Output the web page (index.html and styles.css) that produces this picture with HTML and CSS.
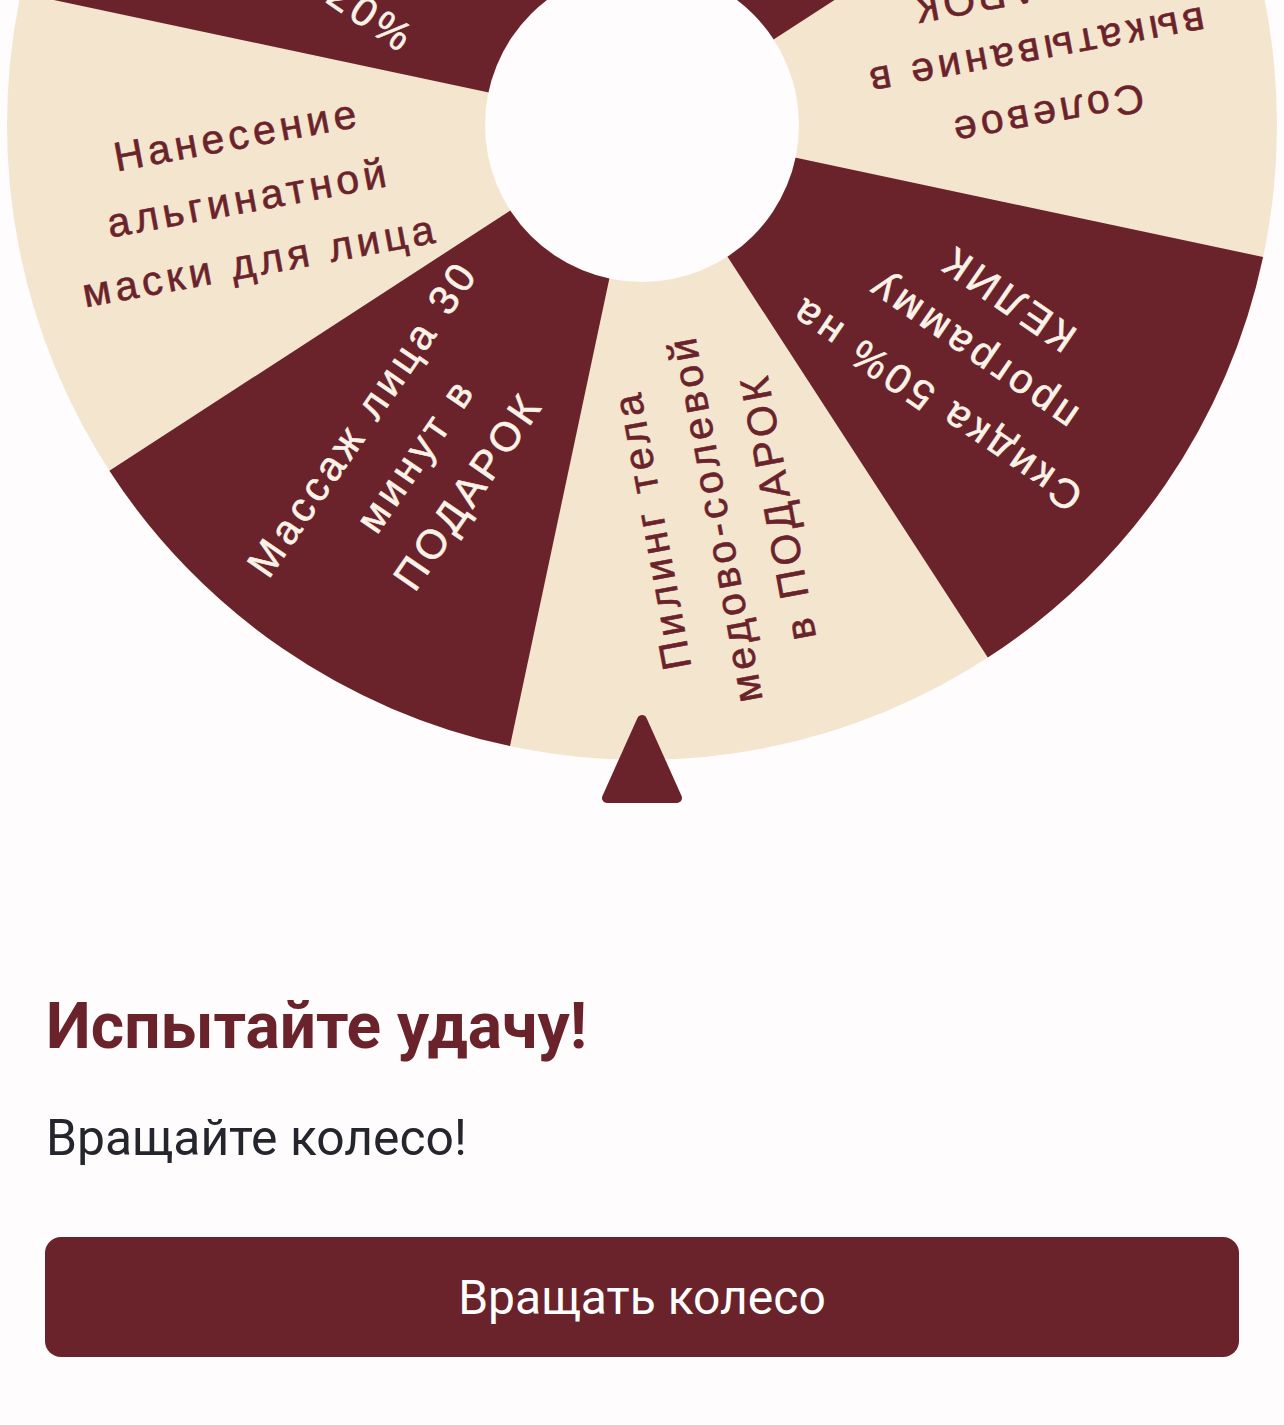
FILE: index.html
```html
<!DOCTYPE html>
<html lang="ru">
<head>
<meta charset="utf-8">
<title>Колесо фортуны</title>
<link rel="stylesheet" href="styles.css">
</head>
<body>
<div class="page">
  <div class="wheel-wrap">
    <svg class="wheel" viewBox="0 0 1284 830" width="1284" height="830" xmlns="http://www.w3.org/2000/svg">
      <circle class="seg-cream" cx="642" cy="125" r="635"/>
      <path class="seg-dark" d="M642 125 L987.8 657.6 A635 635 0 0 0 1263.1 257.0 Z"/>
      <path class="seg-dark" d="M642 125 L1174.6 -220.8 A635 635 0 0 0 774.0 -496.1 Z"/>
      <path class="seg-dark" d="M642 125 L296.2 -407.6 A635 635 0 0 0 20.9 -7.0 Z"/>
      <path class="seg-dark" d="M642 125 L109.4 470.8 A635 635 0 0 0 510.0 746.1 Z"/>

      <g transform="translate(642 125) rotate(-100.5)">
        <text class="wt on-cream" x="-400" y="-50">Пилинг тела</text>
        <text class="wt on-cream" x="-400" y="14">медово-солевой</text>
        <text class="wt on-cream" x="-400" y="78">в ПОДАРОК</text>
      </g>
      <g transform="translate(642 125) rotate(-145.5)">
        <text class="wt on-dark" x="-400" y="-50">Скидка 50% на</text>
        <text class="wt on-dark" x="-400" y="14">программу</text>
        <text class="wt on-dark" x="-400" y="78">КЕЛИК</text>
      </g>
      <g transform="translate(642 125) rotate(-190.5)">
        <text class="wt on-cream" x="-400" y="-50">Солевое</text>
        <text class="wt on-cream" x="-400" y="14">выкатывание в</text>
        <text class="wt on-cream" x="-400" y="78">ПОДАРОК</text>
      </g>
      <g transform="translate(642 125) rotate(-235.5)">
        <text class="wt on-dark" x="-400" y="-18">Скидка 30% на</text>
        <text class="wt on-dark" x="-400" y="46">массаж тела</text>
      </g>
      <g transform="translate(642 125) rotate(-280.5)">
        <text class="wt on-cream" x="-400" y="-18">Обёртывание</text>
        <text class="wt on-cream" x="-400" y="46">в ПОДАРОК</text>
      </g>
      <g transform="translate(642 125) rotate(-325.5)">
        <text class="wt on-dark" x="-400" y="-50">Скидка на</text>
        <text class="wt on-dark" x="-400" y="14">комплекс</text>
        <text class="wt on-dark" x="-400" y="78">процедур 20%</text>
      </g>
      <g transform="translate(642 125) rotate(-10.5)">
        <text class="wt on-cream" x="-400" y="-50">Нанесение</text>
        <text class="wt on-cream" x="-400" y="14">альгинатной</text>
        <text class="wt on-cream" x="-400" y="78">маски для лица</text>
      </g>
      <g transform="translate(642 125) rotate(-55.5)">
        <text class="wt on-dark" x="-400" y="-50">Массаж лица 30</text>
        <text class="wt on-dark" x="-400" y="14">минут в</text>
        <text class="wt on-dark" x="-400" y="78">ПОДАРОК</text>
      </g>

      <circle class="hub" cx="642" cy="125" r="157"/>
      <polygon class="pointer" points="642,720 607,798 677,798"/>
    </svg>
  </div>
  <div class="content">
    <h1 class="title">Испытайте удачу!</h1>
    <p class="subtitle">Вращайте колесо!</p>
    <button class="spin-btn" type="button">Вращать колесо</button>
  </div>
</div>
</body>
</html>
```
FILE: styles.css
```css
html, body {
  margin: 0;
  padding: 0;
}

body {
  background: #fefcfc;
  font-family: Roboto, "Liberation Sans", Arial, sans-serif;
  width: 1284px;
  height: 1425px;
  overflow: hidden;
}

.page {
  display: flex;
  flex-direction: column;
}

.wheel-wrap {
  height: 830px;
  overflow: hidden;
}

.wheel {
  display: block;
}

.seg-cream {
  fill: #f4e5cf;
}

.seg-dark {
  fill: #6b232b;
}

.hub {
  fill: #fefcfc;
}

.pointer {
  fill: #6b232b;
  stroke: #6b232b;
  stroke-width: 10;
  stroke-linejoin: round;
}

.wt {
  font-family: "Liberation Sans", Arial, sans-serif;
  font-size: 41px;
  letter-spacing: 4.5px;
  text-anchor: middle;
  stroke-width: 0.6px;
}

.on-cream {
  fill: #6b232b;
  stroke: #6b232b;
}

.on-dark {
  fill: #fbf2e8;
  stroke: #fbf2e8;
}

.content {
  display: flex;
  flex-direction: column;
  padding: 161px 45px 0;
}

.title {
  margin: 0;
  font-size: 64px;
  line-height: 72px;
  font-weight: 700;
  color: #6b232b;
  padding-left: 1px;
}

.subtitle {
  margin: 46px 0 0;
  font-size: 49.8px;
  line-height: 58px;
  font-weight: 400;
  color: #25252d;
  padding-left: 1px;
}

.spin-btn {
  margin-top: 70px;
  height: 120px;
  width: 100%;
  border: none;
  border-radius: 16px;
  background: #6b232b;
  color: #ffffff;
  font-family: Roboto, "Liberation Sans", Arial, sans-serif;
  font-size: 48px;
  font-weight: 400;
  cursor: pointer;
}
```
